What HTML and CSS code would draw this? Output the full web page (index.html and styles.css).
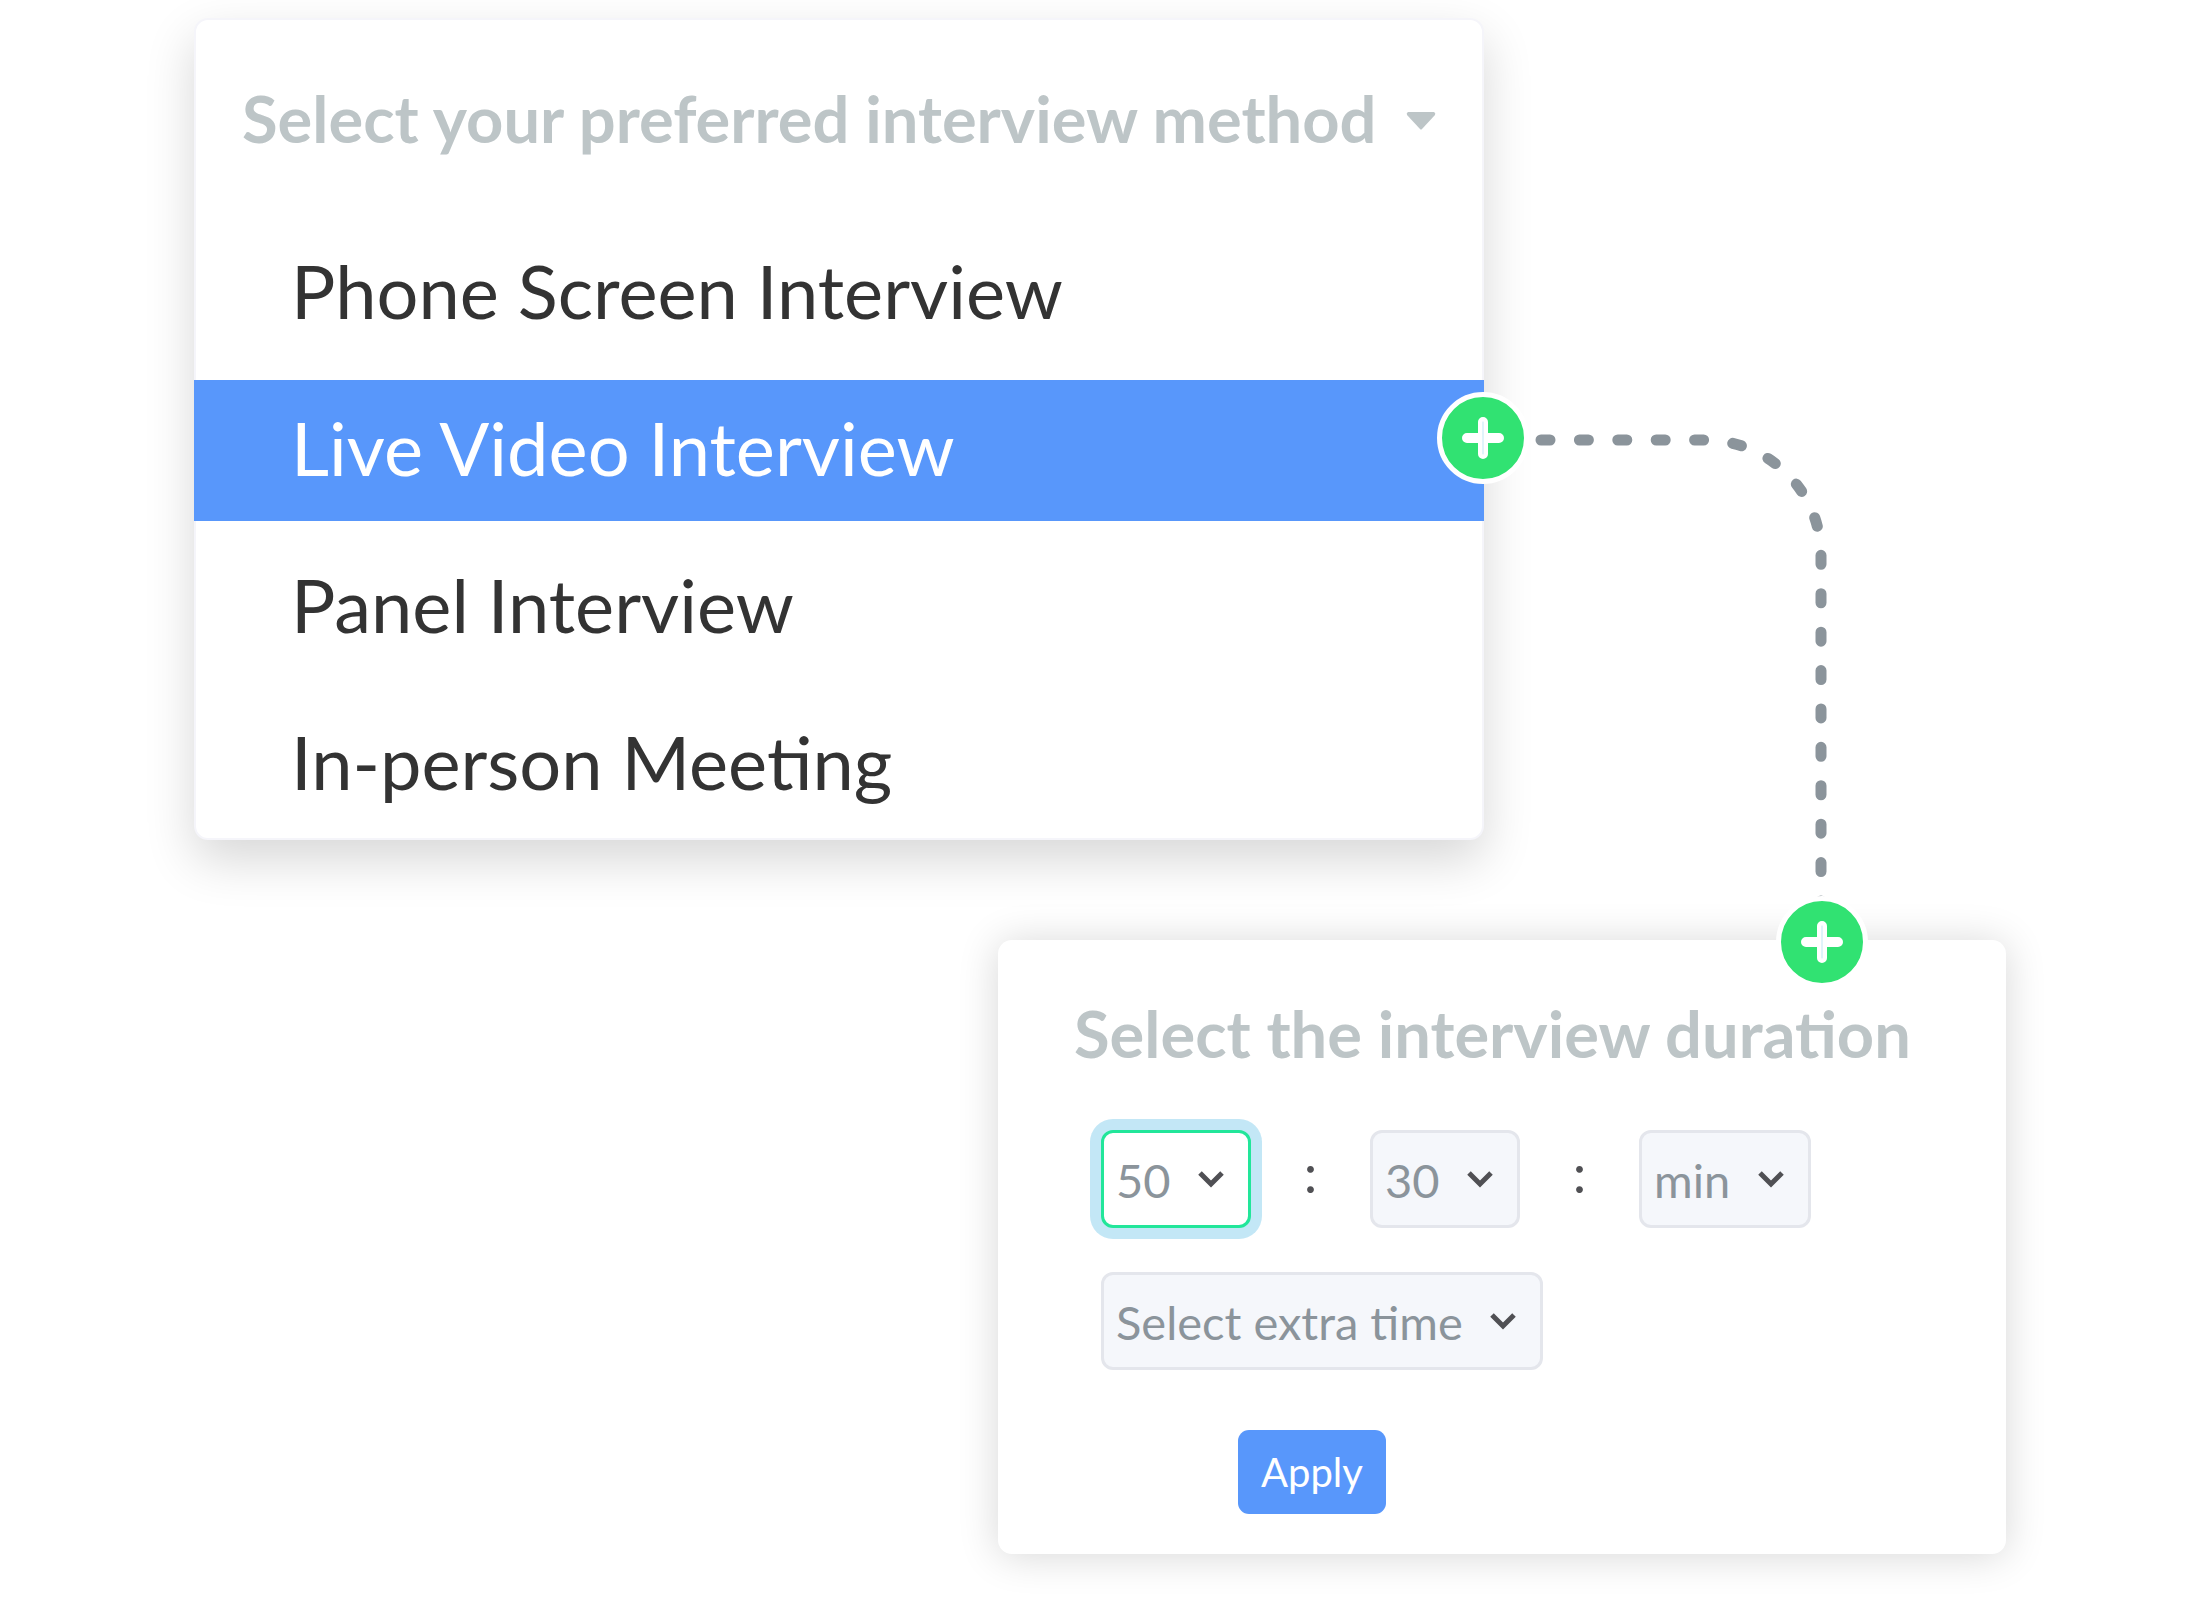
FILE: index.html
```
<!DOCTYPE html>
<html lang="en">
<head>
    <meta charset="UTF-8">
    <meta name="viewport" content="width=device-width, initial-scale=1.0">
    <title>Interview method</title>
    <link rel="stylesheet" href="styles.css">
</head>
<body>
    <main class="flow">
        <section class="card method">
            <button type="button" class="method-head" aria-expanded="true" aria-controls="methods">
                <span>Select your preferred interview method</span>
                <svg class="caret" viewBox="0 0 30 18" aria-hidden="true"><path d="M2 0H28Q30 1 29 3L16 17Q15 18 14 17L1 3Q0 1 2 0Z"/></svg>
            </button>
            <ul class="method-list" id="methods">
                <li><button type="button" class="option">Phone Screen Interview</button></li>
                <li class="active">
                    <button type="button" class="option">Live Video Interview</button>
                    <button type="button" class="plus plus-method" aria-label="Add duration">
                        <svg viewBox="0 0 42 42" aria-hidden="true"><path d="M5 21H37M21 5V37"/><path class="shine" d="M21 5V37"/></svg>
                    </button>
                </li>
                <li><button type="button" class="option">Panel Interview</button></li>
                <li><button type="button" class="option">In-person Meeting</button></li>
            </ul>
        </section>

        <!-- dashed line between the two plus buttons -->
        <svg class="connector" viewBox="0 0 344 480" aria-hidden="true">
            <path d="M57 6H221A116 115 0 0 1 337 121V474"/>
        </svg>

        <section class="card duration">
            <button type="button" class="plus plus-duration" aria-label="Add step">
                <svg viewBox="0 0 42 42" aria-hidden="true"><path d="M5 21H37M21 5V37"/><path class="shine" d="M21 5V37"/></svg>
            </button>
            <h2>Select the interview duration</h2>
            <form>
                <div class="time">
                    <div class="field focus">
                        <select aria-label="Minutes">
                            <option>50</option>
                        </select>
                        <svg class="chevron" viewBox="0 0 26 17" aria-hidden="true"><path d="M2 2L13 13L24 2"/></svg>
                    </div>
                    <span class="colon">:</span>
                    <div class="field">
                        <select aria-label="Seconds">
                            <option>30</option>
                        </select>
                        <svg class="chevron" viewBox="0 0 26 17" aria-hidden="true"><path d="M2 2L13 13L24 2"/></svg>
                    </div>
                    <span class="colon">:</span>
                    <div class="field">
                        <select aria-label="Unit">
                            <option>min</option>
                        </select>
                        <svg class="chevron" viewBox="0 0 26 17" aria-hidden="true"><path d="M2 2L13 13L24 2"/></svg>
                    </div>
                </div>
                <div class="field">
                    <select aria-label="Extra time">
                        <option>Select extra time</option>
                    </select>
                    <svg class="chevron" viewBox="0 0 26 17" aria-hidden="true"><path d="M2 2L13 13L24 2"/></svg>
                </div>
                <button type="button" class="apply">Apply</button>
            </form>
        </section>
    </main>
</body>
</html>
```
FILE: styles.css
```
*{
    box-sizing: border-box;
    padding: 0;
    margin: 0;
}
body{
    background: #fff;
    color: #333;
    font-family: Lato, sans-serif;
}
button,
select{
    font-family: inherit;
    cursor: pointer;
}
.flow{
    display: grid;
    grid-template-columns: 804fr 486fr 522px;
    row-gap: 100px;
    padding: 18px 194px 48px;
}
.card{
    position: relative;
    border-radius: 14px;
    background: #fff;
}

/* method dropdown */
.method{
    grid-column: 1 / 3;
    grid-row: 1;
    padding-bottom: 3px;
    border: 2px solid #f5f5fa;
    box-shadow: 0 20px 50px rgba(0, 0, 0, 0.16);
}
.method-head{
    display: flex;
    justify-content: space-between;
    align-items: center;
    width: 100%;
    height: 195px;
    padding: 0 46px;
    border: 0;
    background: none;
    color: #bdc5c7;
    font-size: 65px;
    font-weight: 700;
}
.caret{
    width: 30px;
    height: 18px;
    margin-top: 6px;
    fill: #bdc5c7;
}
.method-list{
    display: grid;
    gap: 16px;
    margin: 0 -2px;
    padding-top: 8px;
    list-style: none;
}
.method-list li{
    position: relative;
}
.option{
    display: block;
    width: 100%;
    height: 141px;
    padding: 0 97px 6px;
    border: 0;
    background: none;
    color: #333;
    font-size: 74px;
    text-align: left;
}
.active .option{
    background: #5897fb;
    color: #fff;
}

/* green plus buttons */
.plus{
    position: absolute;
    display: flex;
    justify-content: center;
    align-items: center;
    width: 92px;
    height: 92px;
    border: 5px solid #fff;
    border-radius: 50%;
    background: #31e272;
    z-index: 1;
}
.plus svg{
    width: 42px;
    height: 42px;
    fill: none;
    stroke: #fff;
    stroke-width: 10;
    stroke-linecap: round;
}
.plus .shine{
    stroke: #c3e7f6;
    stroke-width: 1;
}
.plus-method{
    top: 12px;
    right: -45px;
}
.plus-duration{
    top: -44px;
    right: 138px;
}
.connector{
    grid-column: 3;
    grid-row: 1;
    width: 344px;
    height: 480px;
    margin-top: 416px;
    margin-bottom: -74px;
    fill: none;
    stroke: #8b949b;
    stroke-width: 11;
    stroke-linecap: round;
    stroke-dasharray: 9 29.4;
    z-index: 1;
}

/* duration card */
.duration{
    grid-column: 2 / 4;
    grid-row: 2;
    padding: 55px 76px 40px;
    box-shadow: 0 2px 40px rgba(0, 0, 0, 0.16);
}
.duration h2{
    color: #bdc5c7;
    font-size: 65px;
    font-weight: 700;
    line-height: 77px;
}
.duration form{
    display: flex;
    flex-direction: column;
    align-items: flex-start;
    gap: 44px;
    padding: 58px 0 0 27px;
}
.time{
    display: flex;
    align-items: center;
}
.field{
    position: relative;
}
.field select{
    display: block;
    height: 98px;
    padding: 2px 77px 0 12px;
    border: 3px solid #e4e6ec;
    border-radius: 12px;
    outline: none;
    appearance: none;
    background: #f5f7fb;
    color: #8b949b;
    font-size: 47px;
}
.focus select{
    border-color: #22e69a;
    background: #fff;
    box-shadow: 0 0 0 11px #c3e7f6;
}
.chevron{
    position: absolute;
    top: 41px;
    right: 27px;
    width: 26px;
    height: 17px;
    fill: none;
    stroke: #505054;
    stroke-width: 5;
    pointer-events: none;
}
.colon{
    width: 119px;
    padding-bottom: 12px;
    color: #505054;
    font-size: 54px;
    line-height: 64px;
    text-align: center;
}
.apply{
    height: 84px;
    margin: 16px 0 0 137px;
    padding: 0 23px;
    border: 0;
    border-radius: 11px;
    background: #5897fb;
    color: #fff;
    font-size: 40px;
}
```
